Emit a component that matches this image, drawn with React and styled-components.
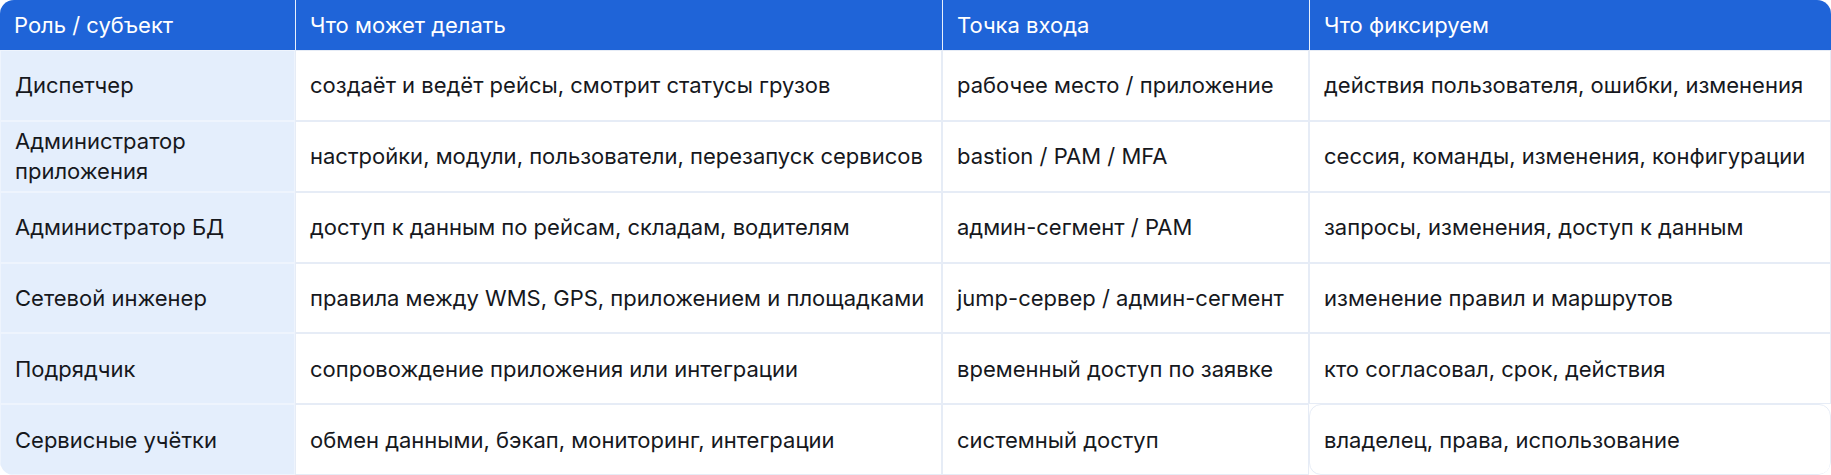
import React from "react";
import styled, { createGlobalStyle } from "styled-components";

const Global = createGlobalStyle`
  html, body { margin: 0; padding: 0; background: #ffffff; }
  body { font-family: Inter, "Noto Sans", "DejaVu Sans", sans-serif; }
  * { box-sizing: border-box; }
`;

const Table = styled.div`
  width: 1831px;
  height: 475px;
  display: grid;
  grid-template-columns: 295px 647px 367px 1fr;
  grid-template-rows: 50px repeat(6, 1fr);
  border-radius: 14px;
  overflow: hidden;
  background: #ffffff;
`;

const HeadCell = styled.div`
  display: flex;
  align-items: center;
  padding: 0 14px;
  background: #1f64d8;
  color: #ffffff;
  font-size: 22px;
  line-height: 30px;
  border-left: ${(p) => (p.$first ? "none" : "1px solid #e8f0fc")};
  white-space: nowrap;
`;

const Cell = styled.div`
  display: flex;
  align-items: center;
  padding: 0 14px;
  font-size: 22px;
  line-height: 30px;
  color: #16181d;
  background: ${(p) => (p.$role ? "#e4eefc" : "#ffffff")};
  border: 1px solid ${(p) => (p.$role ? "#eef4fd" : "#e6ecf6")};
  border-radius: ${(p) => (p.$round ? "12px" : "0")};
`;

const head = ["Роль / субъект", "Что может делать", "Точка входа", "Что фиксируем"];

const rows = [
  ["Диспетчер", "создаёт и ведёт рейсы, смотрит статусы грузов", "рабочее место / приложение", "действия пользователя, ошибки, изменения"],
  ["Администратор приложения", "настройки, модули, пользователи, перезапуск сервисов", "bastion / PAM / MFA", "сессия, команды, изменения, конфигурации"],
  ["Администратор БД", "доступ к данным по рейсам, складам, водителям", "админ-сегмент / PAM", "запросы, изменения, доступ к данным"],
  ["Сетевой инженер", "правила между WMS, GPS, приложением и площадками", "jump-сервер / админ-сегмент", "изменение правил и маршрутов"],
  ["Подрядчик", "сопровождение приложения или интеграции", "временный доступ по заявке", "кто согласовал, срок, действия"],
  ["Сервисные учётки", "обмен данными, бэкап, мониторинг, интеграции", "системный доступ", "владелец, права, использование"],
];

export default function App() {
  return (
    <>
      <Global />
      <Table>
        {head.map((h, i) => (
          <HeadCell key={h} $first={i === 0}>{h}</HeadCell>
        ))}
        {rows.map((r, ri) =>
          r.map((c, ci) => (
            <Cell
              key={ri + "-" + ci}
              $role={ci === 0}
              $round={ri === rows.length - 1 && ci === 3}
            >
              {ri === 1 && ci === 0 ? (
                <span>Администратор<br />приложения</span>
              ) : (
                c
              )}
            </Cell>
          ))
        )}
      </Table>
    </>
  );
}
